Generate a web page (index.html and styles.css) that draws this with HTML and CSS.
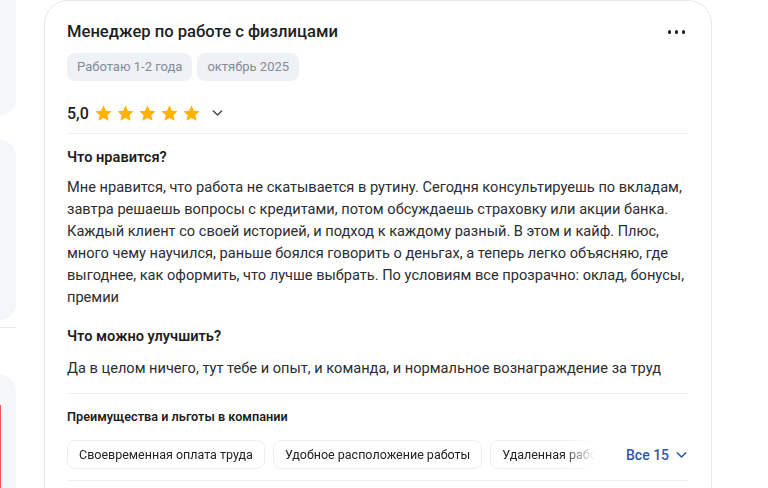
FILE: index.html
```html
<!DOCTYPE html>
<html lang="ru">
<head>
<meta charset="utf-8">
<link rel="stylesheet" href="styles.css">
</head>
<body>
<div class="page">
  <aside class="side">
    <div class="side-card side-card-1"></div>
    <div class="side-card side-card-2"></div>
    <div class="side-line"></div>
    <div class="side-card side-card-3"><div class="side-red"></div></div>
  </aside>
  <main class="review">
    <div class="head">
      <h1 class="title">Менеджер по работе с физлицами</h1>
      <button class="more" aria-label="Ещё"><span></span><span></span><span></span></button>
    </div>
    <div class="tags">
      <span class="tag">Работаю 1-2 года</span>
      <span class="tag">октябрь 2025</span>
    </div>
    <div class="rating">
      <span class="score">5,0</span>
      <span class="stars">
        <svg viewBox="0 0 24 24"><path d="M12 1.8l3.1 6.6 7.1.8-5.3 4.9 1.5 7.1L12 17.6l-6.4 3.6 1.5-7.1L1.8 9.2l7.1-.8z"/></svg>
        <svg viewBox="0 0 24 24"><path d="M12 1.8l3.1 6.6 7.1.8-5.3 4.9 1.5 7.1L12 17.6l-6.4 3.6 1.5-7.1L1.8 9.2l7.1-.8z"/></svg>
        <svg viewBox="0 0 24 24"><path d="M12 1.8l3.1 6.6 7.1.8-5.3 4.9 1.5 7.1L12 17.6l-6.4 3.6 1.5-7.1L1.8 9.2l7.1-.8z"/></svg>
        <svg viewBox="0 0 24 24"><path d="M12 1.8l3.1 6.6 7.1.8-5.3 4.9 1.5 7.1L12 17.6l-6.4 3.6 1.5-7.1L1.8 9.2l7.1-.8z"/></svg>
        <svg viewBox="0 0 24 24"><path d="M12 1.8l3.1 6.6 7.1.8-5.3 4.9 1.5 7.1L12 17.6l-6.4 3.6 1.5-7.1L1.8 9.2l7.1-.8z"/></svg>
      </span>
      <svg class="chev" viewBox="0 0 12 8"><path d="M1.5 1.8L6 6.2l4.5-4.4"/></svg>
    </div>
    <div class="sep sep-1"></div>
    <h2 class="sub sub-1">Что нравится?</h2>
    <p class="text text-1">Мне нравится, что работа не скатывается в рутину. Сегодня консультируешь по вкладам, завтра решаешь вопросы с кредитами, потом обсуждаешь страховку или акции банка. Каждый клиент со своей историей, и подход к каждому разный. В этом и кайф. Плюс, много чему научился, раньше боялся говорить о деньгах, а теперь легко объясняю, где выгоднее, как оформить, что лучше выбрать. По условиям все прозрачно: оклад, бонусы, премии</p>
    <h2 class="sub sub-2">Что можно улучшить?</h2>
    <p class="text text-2">Да в целом ничего, тут тебе и опыт, и команда, и нормальное вознаграждение за труд</p>
    <div class="sep sep-2"></div>
    <h3 class="perks-title">Преимущества и льготы в компании</h3>
    <div class="perks">
      <div class="perk-list">
        <span class="perk">Своевременная оплата труда</span>
        <span class="perk">Удобное расположение работы</span>
        <span class="perk">Удаленная работа</span>
      </div>
      <button class="all">Все 15 <svg viewBox="0 0 12 8"><path d="M1.5 1.8L6 6.2l4.5-4.4"/></svg></button>
    </div>
    <div class="sep sep-3"></div>
  </main>
</div>
</body>
</html>
```

FILE: styles.css
```css
* { box-sizing: border-box; }
html, body {
  margin: 0;
  padding: 0;
  background: #ffffff;
  font-family: Roboto, "Noto Sans", "Liberation Sans", sans-serif;
  color: #222326;
  overflow: hidden;
}
.page {
  display: flex;
  align-items: flex-start;
  gap: 28px;
  width: 768px;
  height: 488px;
}
.side {
  width: 16px;
  flex: none;
  display: flex;
  flex-direction: column;
}
.side-card {
  background: #f4f6fa;
  width: 40px;
  margin-left: -24px;
  border-radius: 16px;
}
.side-card-1 { height: 140px; margin-top: -25px; }
.side-card-2 { height: 180px; margin-top: 25px; }
.side-line {
  height: 1px;
  background: #e6e9ef;
  margin-top: 7px;
}
.side-card-3 {
  height: 160px;
  margin-top: 47px;
  position: relative;
}
.side-red {
  position: absolute;
  left: 24px;
  top: 30px;
  bottom: 0;
  width: 1px;
  background: #f05a4f;
}
.review {
  width: 668px;
  flex: none;
  border: 1px solid #e4e7ee;
  border-radius: 24px;
  padding: 19px 23px 40px 22px;
  min-height: 560px;
}
.head {
  display: flex;
  align-items: center;
  justify-content: space-between;
}
.title {
  margin: 0;
  font-size: 16.6px;
  line-height: 24px;
  font-weight: 500;
  color: #1d1e21;
}
.more {
  border: 0;
  background: none;
  padding: 0;
  margin-right: 3px;
  display: flex;
  gap: 3.5px;
  cursor: pointer;
}
.more span {
  width: 3.5px;
  height: 3.5px;
  border-radius: 50%;
  background: #1f2126;
}
.tags {
  display: flex;
  gap: 5px;
  margin-top: 9px;
}
.tag {
  background: #eef1f6;
  color: #848a97;
  font-size: 13px;
  height: 28px;
  line-height: 28px;
  padding: 0 10px;
  border-radius: 8px;
}
.rating {
  display: flex;
  align-items: center;
  height: 24px;
  margin-top: 20px;
}
.score {
  font-size: 16px;
  font-weight: 500;
  color: #1d1e21;
  margin-right: 5px;
}
.stars {
  display: flex;
  gap: 3px;
}
.stars svg {
  width: 19px;
  height: 19px;
  fill: #ffb200;
}
.chev {
  width: 11px;
  height: 8px;
  margin-left: 11px;
  fill: none;
  stroke: #4a4d55;
  stroke-width: 1.7;
  stroke-linecap: round;
  stroke-linejoin: round;
}
.sep {
  height: 1px;
  background: #eef0f4;
}
.sep-1 { margin-top: 8px; }
.sub {
  margin: 0;
  font-size: 14.6px;
  line-height: 20px;
  font-weight: 600;
  color: #1d1e21;
}
.sub-1 { margin-top: 13px; }
.sub-2 { margin-top: 18px; }
.text {
  margin: 0;
  font-size: 14.6px;
  line-height: 22px;
  color: #2b2d31;
}
.text-1 { margin-top: 9px; }
.text-2 { margin-top: 11px; }
.sep-2 { margin-top: 14px; }
.perks-title {
  margin: 13px 0 0;
  font-size: 12.7px;
  line-height: 20px;
  font-weight: 600;
  color: #1d1e21;
}
.perks {
  display: flex;
  align-items: center;
  margin-top: 13px;
}
.perk-list {
  display: flex;
  gap: 8px;
  width: 530px;
  overflow: hidden;
  white-space: nowrap;
  -webkit-mask-image: linear-gradient(to right, #000 495px, transparent 528px);
  mask-image: linear-gradient(to right, #000 495px, transparent 528px);
}
.perk {
  flex: none;
  border: 1px solid #eceef3;
  border-radius: 8px;
  height: 29px;
  line-height: 27px;
  padding: 0 11px;
  font-size: 12.5px;
  color: #222326;
}
.all {
  border: 0;
  background: none;
  margin-left: 29px;
  padding: 0;
  display: flex;
  align-items: center;
  gap: 7px;
  font-family: inherit;
  font-size: 14px;
  font-weight: 500;
  color: #2b5aa9;
  cursor: pointer;
}
.all svg {
  width: 11px;
  height: 8px;
  fill: none;
  stroke: #2b5aa9;
  stroke-width: 1.8;
  stroke-linecap: round;
  stroke-linejoin: round;
}
.sep-3 { margin-top: 11px; }
```
